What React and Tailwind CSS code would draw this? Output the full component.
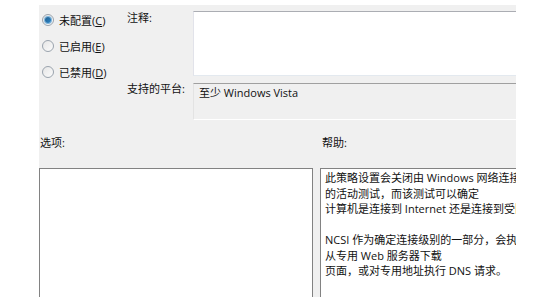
import React from "react";

const font = { fontFamily: '"Open Sans", "Noto Sans CJK SC", sans-serif' };

function Radio({ checked }) {
  return (
    <span className="relative inline-flex h-[12px] w-[12px] shrink-0 items-center justify-center rounded-full border border-[#9aa3ad] bg-gradient-to-br from-[#e6e6e6] to-[#fbfbfb]">
      {checked && (
        <span className="h-[6px] w-[6px] rounded-full bg-gradient-to-br from-[#1f5f8f] to-[#2d86c9] ring-1 ring-[#7fb6dd]" />
      )}
    </span>
  );
}

function RadioRow({ label, accel, checked }) {
  return (
    <div className="flex h-[26px] items-center gap-[5px]">
      <Radio checked={checked} />
      <span className="text-[11px] leading-none text-[#111]">
        {label}(<span className="underline">{accel}</span>)
      </span>
    </div>
  );
}

export default function App() {
  const help1 = [
    "此策略设置会关闭由 Windows 网络连接状",
    "的活动测试，而该测试可以确定",
    "计算机是连接到 Internet 还是连接到受限",
  ];
  const help2 = [
    "NCSI 作为确定连接级别的一部分，会执行",
    "从专用 Web 服务器下载",
    "页面，或对专用地址执行 DNS 请求。",
  ];
  return (
    <div className="h-[297px] w-[560px] overflow-hidden bg-white" style={font}>
      <div className="ml-[39px] mt-[5px] h-[292px] w-[477px] overflow-hidden bg-[#f0f0f0]">
        <div className="flex w-[540px] flex-col">
          {/* top section */}
          <div className="flex h-[121px]">
            <div className="flex w-[88px] shrink-0 flex-col pl-[3px] pt-[2px]">
              <RadioRow label="未配置" accel="C" checked />
              <RadioRow label="已启用" accel="E" />
              <RadioRow label="已禁用" accel="D" />
            </div>
            <div className="flex w-[66px] shrink-0 flex-col text-[11px] leading-none text-[#111]">
              <div className="pt-[7px]">注释:</div>
              <div className="pt-[60px]">支持的平台:</div>
            </div>
            <div className="flex flex-1 flex-col">
              <div className="mt-[6px] h-[65px] border border-t-[#abadb3] border-l-[#e2e3ea] border-b-[#e3e9ef] border-r-[#dbdfe6] bg-white" />
              <div className="mt-[7px] h-[37px] border-t border-t-[#a0a0a0] border-l border-l-[#e3e3e3] border-b border-b-white bg-[#f0f0f0] pl-[5px] pt-[1px] text-[11px] text-[#111]">
                至少 Windows Vista
              </div>
            </div>
          </div>
          {/* labels */}
          <div className="flex h-[42px] items-start pt-[11px] text-[11px] leading-none text-[#111]">
            <div className="w-[283px] shrink-0 pl-[1px]">选项:</div>
            <div>帮助:</div>
          </div>
          {/* bottom boxes */}
          <div className="flex h-[130px] gap-[7px]">
            <div className="w-[274px] shrink-0 border border-[#828282] border-b-0 bg-white" />
            <div className="min-w-0 flex-1 overflow-hidden border border-[#828282] border-b-0 border-r-0 bg-white pl-[4px] pt-[1px] text-[11px] leading-[15.5px] text-[#111]">
              {help1.map((l) => (
                <div key={l} className="whitespace-nowrap">{l}</div>
              ))}
              <div className="h-[15.5px]" />
              {help2.map((l) => (
                <div key={l} className="whitespace-nowrap">{l}</div>
              ))}
            </div>
          </div>
        </div>
      </div>
    </div>
  );
}
